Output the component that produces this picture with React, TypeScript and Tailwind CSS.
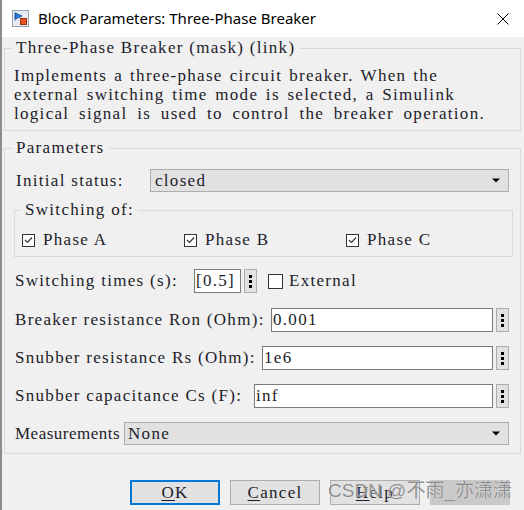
import React from 'react';

const SERIF = "font-['Liberation_Serif',serif] text-[17px] tracking-[1.3px] text-[#1c1c2a]";

function Dots() {
  return (
    <div className="w-[13px] h-full bg-[#e1e1e1] border border-[#adadad] flex flex-col items-center justify-center gap-[2px]">
      <span className="w-[3px] h-[3px] bg-black" />
      <span className="w-[3px] h-[3px] bg-black" />
      <span className="w-[3px] h-[3px] bg-black" />
    </div>
  );
}

function Check({ on, big }: { on: boolean; big?: boolean }) {
  return (
    <span
      className={
        big
          ? 'w-[15px] h-[15px] border border-[#333] bg-white flex items-center justify-center shrink-0'
          : 'w-[13px] h-[13px] border border-[#333] bg-white flex items-center justify-center shrink-0'
      }
    >
      {on && (
        <svg width="9" height="8" viewBox="0 0 9 8">
          <polyline points="1,4 3.5,6.5 8,1.5" fill="none" stroke="#333" strokeWidth="1.2" />
        </svg>
      )}
    </span>
  );
}

function Arrow() {
  return (
    <svg width="8" height="5" viewBox="0 0 8 5" className="ml-auto mr-[8px] shrink-0">
      <polygon points="0,0.5 8,0.5 4,4.5" fill="#000" />
    </svg>
  );
}

function Field({ label, value, w }: { label: string; value: string; w: string }) {
  return (
    <div className="flex items-center h-[24px]">
      <span className={`${w} whitespace-pre shrink-0`}>{label}</span>
      <div className="flex-1 h-full bg-white border border-[#7a7a7a] pl-[1px] flex items-center">
        {value}
      </div>
      <div className="ml-[3px] h-full">
        <Dots />
      </div>
    </div>
  );
}

function BlockIcon() {
  return (
    <svg width="17" height="17" viewBox="0 0 17 17">
      <rect x="0.5" y="0.5" width="16" height="16" fill="#e6ecf2" stroke="#98a4b0" />
      <path d="M3 2.5 L3 10.5 M3.5 3 L10 6 L3.5 9 Z" fill="#2c7bd4" stroke="#1d5fa8" strokeWidth="1" />
      <rect x="8.5" y="8.5" width="6" height="6" fill="#e8541e" stroke="#9c3210" />
    </svg>
  );
}

export default function App() {
  return (
    <div className="w-[524px] h-[510px] bg-[#f0f0f0] border-l-2 border-[#8c8c8c] relative overflow-hidden flex flex-col">
      {/* Title bar */}
      <div className="h-[37px] bg-white flex items-center pl-[10px] shrink-0">
        <BlockIcon />
        <span className="ml-[9px] font-['Noto_Sans',sans-serif] text-[15px] text-black">
          Block Parameters: Three-Phase Breaker
        </span>
        <svg width="12" height="12" viewBox="0 0 12 12" className="ml-auto mr-[15px]">
          <path d="M0.5 0.5 L11.5 11.5 M11.5 0.5 L0.5 11.5" stroke="#000" strokeWidth="1" />
        </svg>
      </div>

      <div className={SERIF}>
        {/* Description */}
        <fieldset className="mt-[3px] ml-[2px] mr-[3px] border border-[#dadada]">
          <legend className="ml-[7px] px-[4px] leading-[16px]">Three-Phase Breaker (mask) (link)</legend>
          <div className="pl-[9px] pt-[10px] pb-[7px] leading-[19px] whitespace-nowrap">
            <div className="w-[424px] [text-align-last:justify]">Implements a three-phase circuit breaker. When the</div>
            <div className="w-[441px] [text-align-last:justify]">external switching time mode is selected, a Simulink</div>
            <div className="w-[471px] [text-align-last:justify]">logical signal is used to control the breaker operation.</div>
          </div>
        </fieldset>

        {/* Parameters */}
        <fieldset className="mt-[9px] ml-[2px] mr-[3px] border border-[#dadada]">
          <legend className="ml-[7px] px-[4px] leading-[16px]">Parameters</legend>
          <div className="pl-[10px] pr-[11px] pt-[13px] pb-[8px]">
            <div className="flex items-center h-[23px]">
              <span className="w-[135px] pl-px whitespace-pre shrink-0">Initial status:</span>
              <div className="flex-1 h-full bg-[#e1e1e1] border border-[#adadad] pl-[4px] flex items-center">
                closed
                <Arrow />
              </div>
            </div>

            <fieldset className="mt-[10px] ml-[-1px] mr-[-4px] border border-[#dadada]">
              <legend className="ml-[6px] px-[4px] leading-[16px]">Switching of:</legend>
              <div className="pt-[12px] pb-[6px] pl-[7px] flex h-[38px] items-start">
                {['Phase A', 'Phase B', 'Phase C'].map((p) => (
                  <div key={p} className="w-[162px] h-[20px] flex items-center gap-[8px]">
                    <Check on />
                    <span className="whitespace-pre">{p}</span>
                  </div>
                ))}
              </div>
            </fieldset>

            <div className="mt-[12px] flex items-center h-[24px]">
              <span className="w-[179px] whitespace-pre shrink-0">Switching times (s):</span>
              <div className="w-[47px] h-full bg-white border border-[#7a7a7a] pl-[1px] flex items-center">
                [0.5]
              </div>
              <div className="ml-[3px] h-full">
                <Dots />
              </div>
              <div className="ml-[11px] flex items-center gap-[6px]">
                <Check on={false} big />
                <span>External</span>
              </div>
            </div>

            <div className="mt-[15px] flex flex-col gap-[14px]">
              <Field w="w-[256px]" label="Breaker resistance Ron (Ohm):" value="0.001" />
              <Field w="w-[247px]" label="Snubber resistance Rs (Ohm):" value="1e6" />
              <Field w="w-[239px]" label="Snubber capacitance Cs (F):" value="inf" />
              <div className="flex items-center h-[23px]">
                <span className="w-[109px] whitespace-pre shrink-0 tracking-[0.5px]">Measurements</span>
                <div className="flex-1 h-full bg-[#e1e1e1] border border-[#adadad] pl-[3px] flex items-center">
                  None
                  <Arrow />
                </div>
              </div>
            </div>
          </div>
        </fieldset>

        {/* Buttons */}
        <div className="mt-[26px] flex pl-[128px] gap-[10px]">
          <button className="w-[90px] h-[25px] bg-[#e1e1e1] border-2 border-[#0078d7] flex items-center justify-center">
            <span><span className="underline underline-offset-2">O</span>K</span>
          </button>
          <button className="w-[90px] h-[25px] bg-[#e1e1e1] border border-[#adadad] flex items-center justify-center">
            <span><span className="underline underline-offset-2">C</span>ancel</span>
          </button>
          <button className="w-[90px] h-[25px] bg-[#e1e1e1] border border-[#adadad] flex items-center justify-center">
            <span><span className="underline underline-offset-2">H</span>elp</span>
          </button>
          <div className="w-[80px] h-[25px] bg-[#c9c9c9]" />
        </div>
      </div>

      {/* Watermark */}
      <div className="absolute left-[326px] top-[480px] font-['Liberation_Sans','Noto_Sans_CJK_SC',sans-serif] text-[19px] leading-[22px] text-[#8e8e8e] [text-shadow:0_0_1px_#ffffff] whitespace-nowrap">
        CSDN @不雨_亦潇潇
      </div>
    </div>
  );
}
